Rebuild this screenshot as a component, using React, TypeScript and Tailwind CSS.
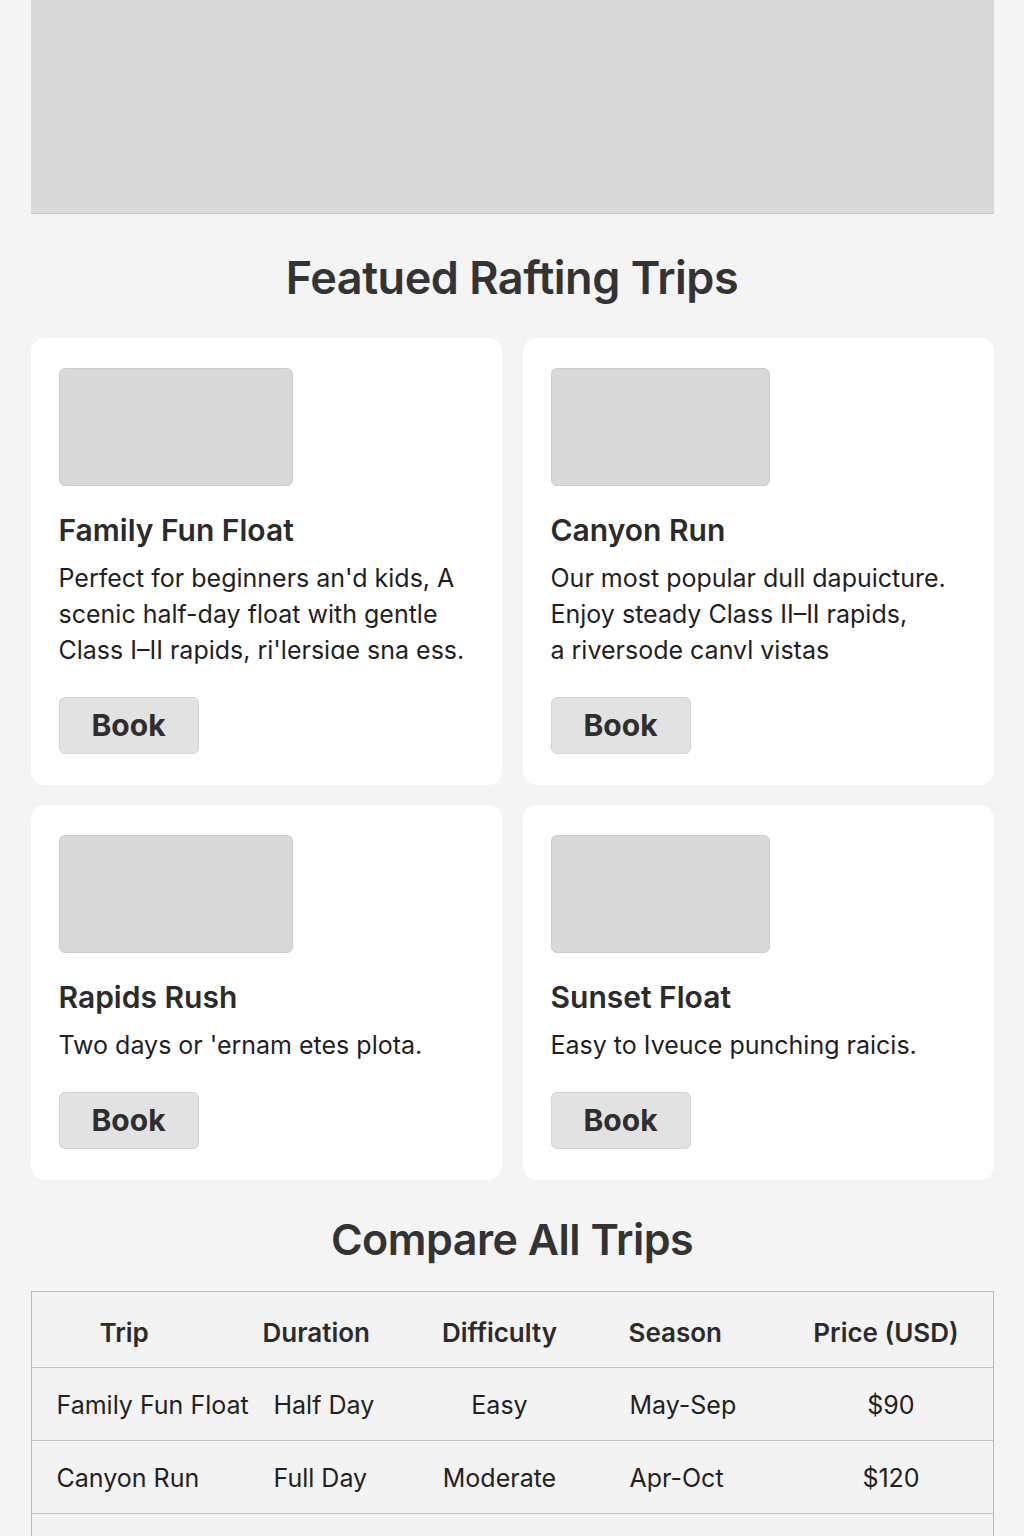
const TRIPS = [
  {
    name: "Family Fun Float",
    imgW: "w-[234px]",
    lines: ["Perfect for beginners an'd kids, A", "scenic half-day float with gentle", "Class I–II rapids, ri'lersiɑe sna ess."],
  },
  {
    name: "Canyon Run",
    imgW: "w-[219px]",
    lines: ["Our most popular dull dapuicture.", "Enjoy steady Class II–II rapids,", "a riversode canvl vistas"],
  },
  {
    name: "Rapids Rush",
    imgW: "w-[234px]",
    lines: ["Two days or 'ernam etes plota."],
  },
  {
    name: "Sunset Float",
    imgW: "w-[219px]",
    lines: ["Easy to Iveuce punching raicis."],
  },
];

const ROWS = [
  ["Family Fun Float", "Half Day", "Easy", "May-Sep", "$90"],
  ["Canyon Run", "Full Day", "Moderate", "Apr-Oct", "$120"],
  ["Rapids Rush", "2 Days", "Difficult", "Jun-Aug", "$320"],
];

function TripCard({ trip }: { trip: (typeof TRIPS)[number] }) {
  return (
    <div className="bg-white rounded-[14px] pt-[30px] pb-[31px] px-[28px] flex flex-col">
      <div className={`${trip.imgW} h-[118px] bg-[#d9d9d9] border border-[#cdcdcd] rounded-[6px]`} />
      <h3 className="mt-[26px] text-[30px] leading-[36px] font-semibold text-[#2b2b2b]">{trip.name}</h3>
      <p className="mt-[12px] text-[25px] leading-[36px] text-[#1f1f1f]">
        {trip.lines.map((l, i) => (
          <span key={i} className="block whitespace-nowrap">
            {l}
          </span>
        ))}
      </p>
      <div className="mt-auto pt-[29px]">
        <button className="h-[57px] px-[32px] bg-[#e2e2e2] border border-[#d3d3d3] rounded-[6px] text-[30px] font-bold text-[#2e2e2e]">
          Book
        </button>
      </div>
    </div>
  );
}

export default function App() {
  return (
    <div className="min-h-screen bg-[#f4f4f4] font-['Inter',_'Liberation_Sans',_sans-serif]">
      <div className="w-[963px] mx-auto">
        <div className="h-[214px] bg-[#d9d9d9] border-b border-[#c8c8c8]" />

        <h2 className="mt-[38px] text-center text-[45px] leading-[52px] font-semibold tracking-[-0.5px] text-[#333]">
          Featued Rafting Trips
        </h2>

        <div className="mt-[34px] grid grid-cols-2 gap-x-[21px] gap-y-[20px]">
          {TRIPS.map((t) => (
            <TripCard key={t.name} trip={t} />
          ))}
        </div>

        <h2 className="mt-[34px] text-center text-[43px] leading-[50px] font-semibold tracking-[-0.5px] text-[#333]">
          Compare All Trips
        </h2>

        <div className="mt-[27px] border border-[#b9b9b9] bg-[#f3f3f3]">
          <div className="grid grid-cols-[224px_154px_180px_200px_1fr] h-[75px] pt-[5px] items-center text-[26px] font-semibold text-[#2b2b2b]">
            <div className="pl-[68px]">Trip</div>
            <div className="pl-[7px]">Duration</div>
            <div className="text-center">Difficulty</div>
            <div className="pl-[39px]">Season</div>
            <div className="text-center pr-[10px]">Price (USD)</div>
          </div>
          {ROWS.map((r) => (
            <div
              key={r[0]}
              className="grid grid-cols-[224px_154px_180px_200px_1fr] h-[73px] pt-[4px] items-center border-t border-[#c4c4c4] text-[25px] text-[#222]"
            >
              <div className="pl-[25px] whitespace-nowrap">{r[0]}</div>
              <div className="pl-[18px]">{r[1]}</div>
              <div className="text-center">{r[2]}</div>
              <div className="pl-[40px]">{r[3]}</div>
              <div className="text-center">{r[4]}</div>
            </div>
          ))}
        </div>
      </div>
    </div>
  );
}
